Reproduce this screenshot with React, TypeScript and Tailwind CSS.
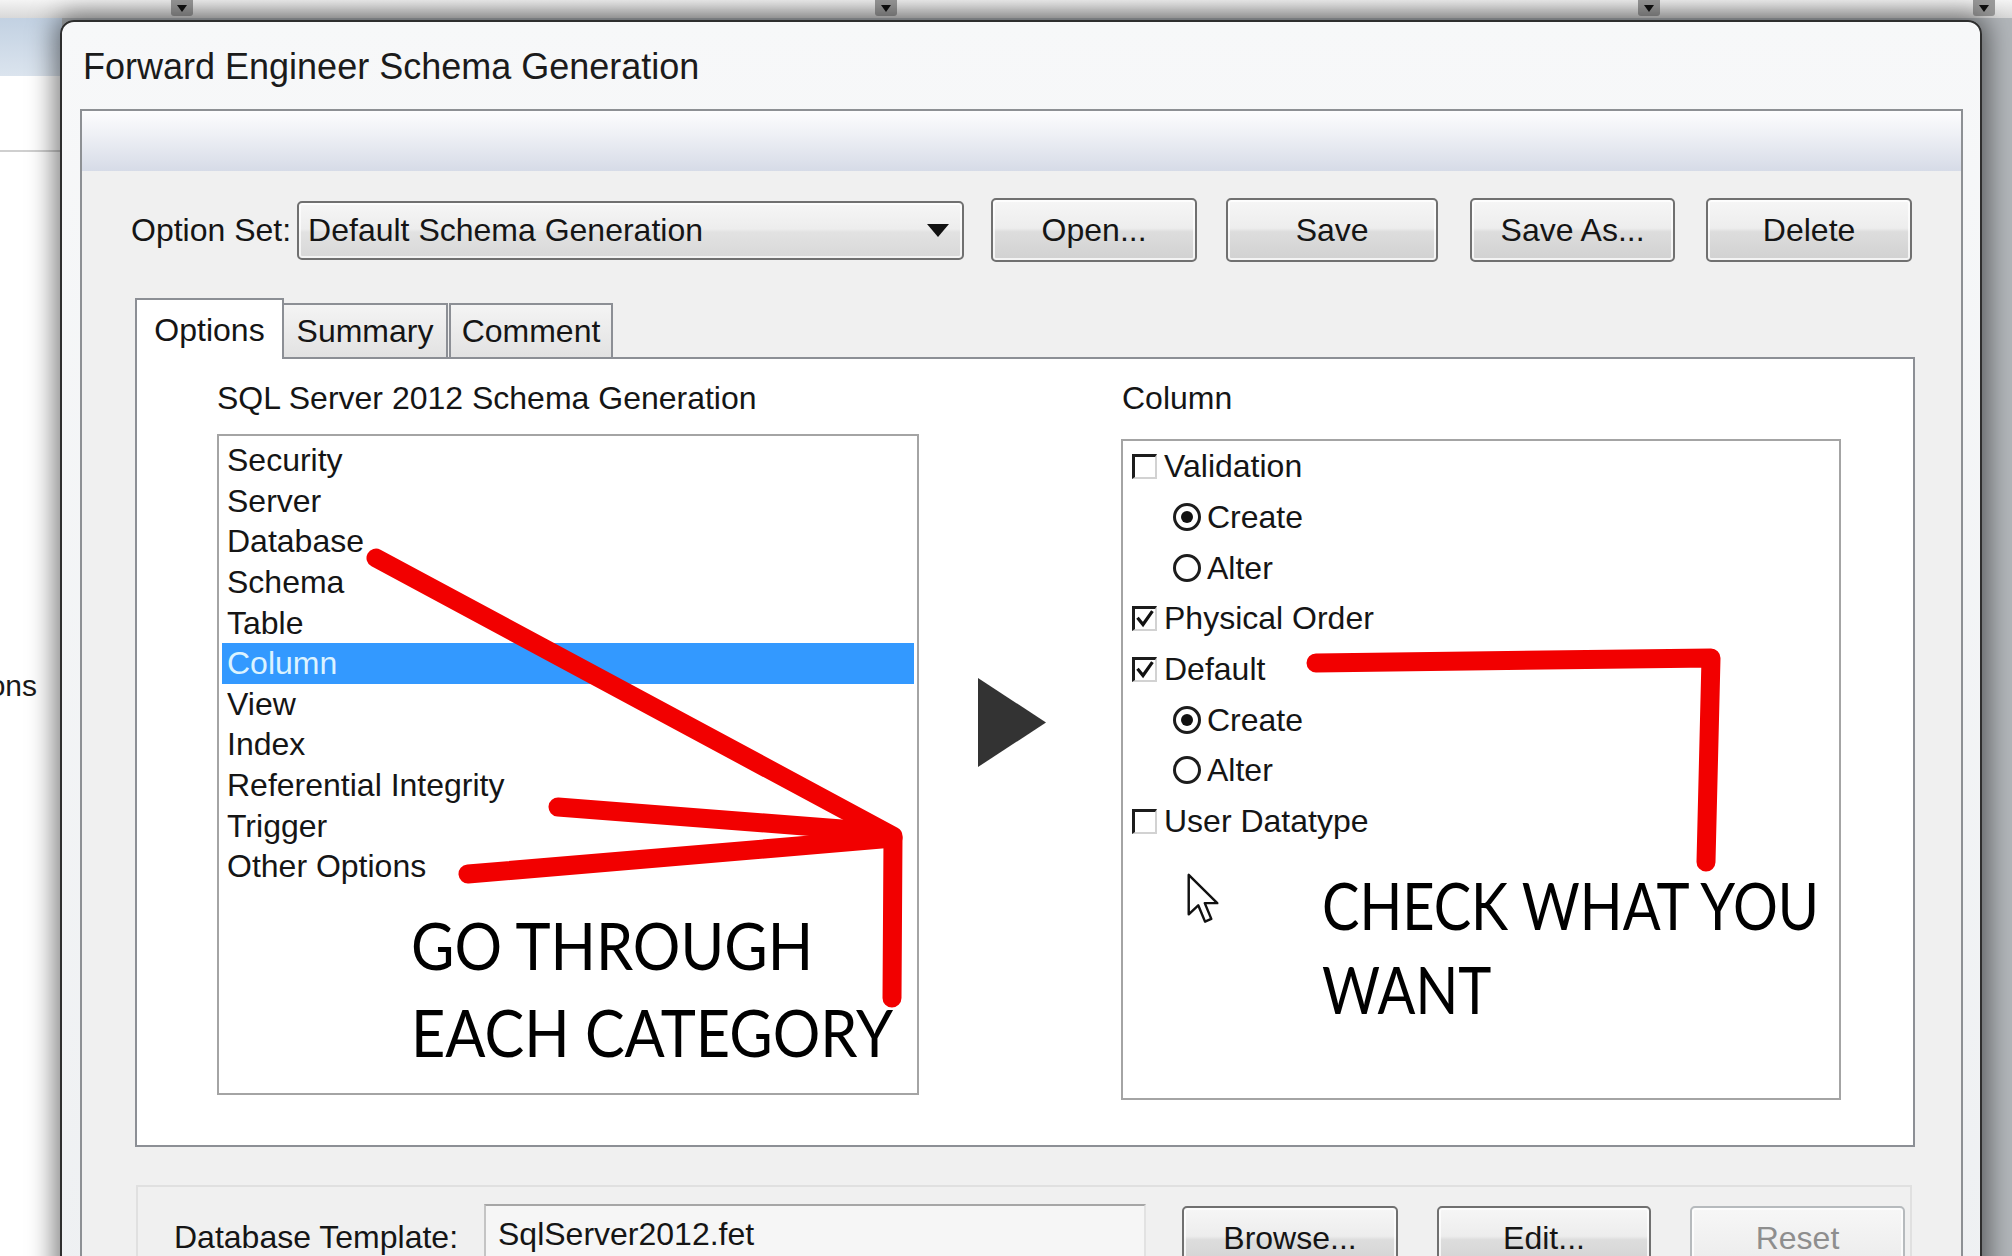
import React from 'react';

const listItems = [
  'Security',
  'Server',
  'Database',
  'Schema',
  'Table',
  'Column',
  'View',
  'Index',
  'Referential Integrity',
  'Trigger',
  'Other Options',
];

type Opt = { kind: 'check' | 'radio'; label: string; on: boolean };

const columnOpts: Opt[] = [
  { kind: 'check', label: 'Validation', on: false },
  { kind: 'radio', label: 'Create', on: true },
  { kind: 'radio', label: 'Alter', on: false },
  { kind: 'check', label: 'Physical Order', on: true },
  { kind: 'check', label: 'Default', on: true },
  { kind: 'radio', label: 'Create', on: true },
  { kind: 'radio', label: 'Alter', on: false },
  { kind: 'check', label: 'User Datatype', on: false },
];

function Marker() {
  return (
    <div className="flex h-[16px] w-[22px] shrink-0 items-center justify-center rounded-b-[3px] bg-[#9b9b9b]">
      <svg width="10" height="7" viewBox="0 0 10 7">
        <path d="M0 0h10L5 7z" fill="#111" />
      </svg>
    </div>
  );
}

function WinButton({ label, className = '', disabled = false }: { label: string; className?: string; disabled?: boolean }) {
  const tone = disabled
    ? 'border-[#b6babd] text-[#8e8e8e] bg-[linear-gradient(180deg,#f7f7f7_0%,#f1f1f1_50%,#ebebeb_100%)]'
    : 'border-[#707070] text-[#151515] bg-[linear-gradient(180deg,#f6f6f6_0%,#ededed_47%,#dddddd_53%,#d1d1d1_100%)]';
  return (
    <div
      className={`flex h-[64px] shrink-0 items-center justify-center rounded-[5px] border-2 text-[32px] shadow-[inset_0_0_0_2px_rgba(255,255,255,0.75)] ${tone} ${className}`}
    >
      {label}
    </div>
  );
}

function CheckBox({ on }: { on: boolean }) {
  return (
    <span className="flex h-[25px] w-[25px] shrink-0 items-center justify-center border-b-2 border-l-[3px] border-r-2 border-t-[3px] border-b-[#d2d2d2] border-l-[#1c1c1c] border-r-[#d2d2d2] border-t-[#1c1c1c] bg-white">
      {on && (
        <svg width="18" height="18" viewBox="0 0 18 18">
          <path d="M2.5 9 L7 14.5 L15.5 2.5" fill="none" stroke="#111" strokeWidth="3.2" strokeLinecap="square" />
        </svg>
      )}
    </span>
  );
}

function Radio({ on }: { on: boolean }) {
  return (
    <span className="flex h-[28px] w-[28px] shrink-0 items-center justify-center rounded-full border-[3px] border-[#1c1c1c] bg-white">
      {on && <span className="h-[12px] w-[12px] rounded-full bg-[#111]" />}
    </span>
  );
}

function BackgroundApp() {
  return (
    <div className="flex h-full flex-col">
      <div className="flex h-[18px] shrink-0 items-start bg-[linear-gradient(180deg,#f4f4f4,#d8d8d8)]">
        <div className="w-[171px] shrink-0" />
        <Marker />
        <div className="w-[682px] shrink-0" />
        <Marker />
        <div className="w-[741px] shrink-0" />
        <Marker />
        <div className="w-[313px] shrink-0" />
        <Marker />
      </div>
      <div className="flex flex-1">
        <div className="w-[62px] shrink-0 bg-white">
          <div className="h-[58px] bg-[linear-gradient(180deg,#c2d1e2,#dbe4ee)]" />
          <div className="h-[76px] border-b-2 border-[#cfcfcf]" />
          <div className="flex justify-end pr-[25px] pt-[516px] text-[30px] leading-[36px] text-[#1a1a1a]">ons</div>
        </div>
        <div className="flex-1 bg-[#b2b6ba]" />
      </div>
    </div>
  );
}

function OptionRow() {
  return (
    <div className="mt-[27px] flex h-[64px] items-center pl-[49px]">
      <span className="text-[32px]">Option Set:</span>
      <div className="ml-[6px] flex h-[59px] w-[667px] items-center justify-between rounded-[5px] border-2 border-[#707070] bg-[linear-gradient(180deg,#f6f6f6_0%,#ededed_47%,#e2e2e2_53%,#d8d8d8_100%)] pl-[9px] pr-[13px] text-[32px] shadow-[inset_0_0_0_2px_rgba(255,255,255,0.7)]">
        <span>Default Schema Generation</span>
        <svg width="22" height="13" viewBox="0 0 22 13">
          <path d="M0 0h22L11 13z" fill="#111" />
        </svg>
      </div>
      <WinButton label="Open..." className="ml-[27px] w-[206px]" />
      <WinButton label="Save" className="ml-[29px] w-[212px]" />
      <WinButton label="Save As..." className="ml-[32px] w-[205px]" />
      <WinButton label="Delete" className="ml-[31px] w-[206px]" />
    </div>
  );
}

function Tabs() {
  return (
    <div className="mt-[36px] flex h-[59px] items-start pl-[53px] text-[32px]">
      <div className="relative z-10 flex h-[61px] w-[149px] items-center justify-center border-2 border-b-0 border-[#8c8f95] bg-white">
        Options
      </div>
      <div className="mt-[5px] flex h-[54px] w-[164px] items-center justify-center border-2 border-b-0 border-l-0 border-[#8c8f95] bg-[linear-gradient(180deg,#f4f4f4,#e2e2e2)]">
        Summary
      </div>
      <div className="ml-[1px] mt-[5px] flex h-[54px] w-[164px] items-center justify-center border-2 border-b-0 border-[#8c8f95] bg-[linear-gradient(180deg,#f4f4f4,#e2e2e2)]">
        Comment
      </div>
    </div>
  );
}

function TabPanel() {
  return (
    <div className="ml-[53px] flex h-[790px] w-[1780px] items-start border-2 border-[#8c8f95] bg-white pl-[80px] pt-[20px]">
      <div className="flex w-[702px] flex-col">
        <div className="text-[32px] leading-[38px]">SQL Server 2012 Schema Generation</div>
        <div className="mt-[17px] h-[661px] w-[702px] border-2 border-[#a4a4a4] bg-white px-[3px] pt-[4px]">
          {listItems.map((item) => (
            <div
              key={item}
              className={`flex h-[40.6px] items-center pl-[5px] text-[32px] ${
                item === 'Column' ? 'bg-[#3399ff] text-[#dcf3ff]' : 'text-[#151515]'
              }`}
            >
              {item}
            </div>
          ))}
        </div>
      </div>
      <div className="w-[202px] shrink-0 pl-[59px] pt-[299px]">
        <svg width="68" height="89" viewBox="0 0 68 89">
          <path d="M0 0 L68 44.5 L0 89 Z" fill="#333333" />
        </svg>
      </div>
      <div className="flex w-[720px] flex-col">
        <div className="pl-[1px] text-[32px] leading-[38px]">Column</div>
        <div className="mt-[22px] h-[661px] w-[720px] border-2 border-[#a4a4a4] bg-white pl-[9px]">
          {columnOpts.map((o, i) => (
            <div key={i} className={`flex h-[50.7px] items-center text-[32px] ${o.kind === 'radio' ? 'pl-[41px]' : ''}`}>
              {o.kind === 'check' ? <CheckBox on={o.on} /> : <Radio on={o.on} />}
              <span className={o.kind === 'check' ? 'ml-[7px]' : 'ml-[6px]'}>{o.label}</span>
            </div>
          ))}
        </div>
      </div>
    </div>
  );
}

function TemplateRow() {
  return (
    <div className="ml-[54px] mt-[38px] flex h-[200px] w-[1776px] items-start border-2 border-[#e0e0e0] bg-[#f0f0f0] pl-[36px] pt-[17px]">
      <span className="mt-[14px] w-[310px] shrink-0 text-[32px] leading-[38px]">Database Template:</span>
      <div className="flex h-[60px] w-[662px] shrink-0 items-center border-2 border-b-[#e2e2e2] border-l-[#c4c4c4] border-r-[#e2e2e2] border-t-[#a6a6a6] bg-[#f6f6f6] pl-[12px] text-[32px]">
        SqlServer2012.fet
      </div>
      <WinButton label="Browse..." className="ml-[36px] mt-[2px] w-[216px]" />
      <WinButton label="Edit..." className="ml-[39px] mt-[2px] w-[214px]" />
      <WinButton label="Reset" disabled className="ml-[39px] mt-[2px] w-[215px]" />
    </div>
  );
}

function Dialog() {
  return (
    <div className="absolute left-[60px] top-[20px] h-[1300px] w-[1922px] rounded-t-[14px] border-2 border-[#2e2e2e] bg-[linear-gradient(180deg,#f7f8f9_0%,#eef0f2_100%)] shadow-[0_0_26px_6px_rgba(0,0,0,0.5)]">
      <div className="flex h-[87px] items-center pl-[21px] pt-[2px] text-[36px] text-[#1b1b1b]">
        Forward Engineer Schema Generation
      </div>
      <div className="ml-[18px] w-[1883px] border-2 border-[#8d9094] bg-[#f0f0f0]">
        <div className="h-[60px] bg-[linear-gradient(180deg,#fdfdfe_0%,#eef0f5_40%,#d6dbe7_100%)]" />
        <OptionRow />
        <Tabs />
        <TabPanel />
        <TemplateRow />
      </div>
    </div>
  );
}

function Annotations() {
  return (
    <>
      <svg className="pointer-events-none absolute left-0 top-0 z-20" width={2012} height={1256}>
        <g fill="none" stroke="#f20000" strokeWidth={19} strokeLinecap="round" strokeLinejoin="round">
          <path d="M376 558 L893 836 L892 998" />
          <path d="M558 807 L880 832" />
          <path d="M468 874 L893 838" />
          <path d="M1316 663 L1711 658 L1706 862" />
        </g>
      </svg>
      <div className="pointer-events-none absolute left-[411px] top-[902px] z-30 origin-top-left scale-x-[0.915] whitespace-nowrap font-['Lato',sans-serif] text-[65px] leading-[87px] text-black">
        GO THROUGH
        <br />
        EACH CATEGORY
      </div>
      <div className="pointer-events-none absolute left-[1322px] top-[863px] z-30 origin-top-left scale-x-[0.862] whitespace-nowrap font-['Lato',sans-serif] text-[65px] leading-[84px] text-black">
        CHECK WHAT YOU
        <br />
        WANT
      </div>
      <svg className="pointer-events-none absolute left-[1186px] top-[872px] z-30" width="34" height="56" viewBox="0 0 12.5 20.5">
        <path
          d="M1 1 L1 15.5 L4.5 12.2 L7 18.2 L9.3 17.2 L6.9 11.4 L11.5 11.4 Z"
          fill="#fff"
          stroke="#111"
          strokeWidth="0.9"
          strokeLinejoin="round"
        />
      </svg>
    </>
  );
}

export default function App() {
  return (
    <div className="relative h-[1256px] w-[2012px] overflow-hidden bg-white font-['Liberation_Sans',Arial,sans-serif] text-[#151515]">
      <BackgroundApp />
      <Dialog />
      <Annotations />
    </div>
  );
}
